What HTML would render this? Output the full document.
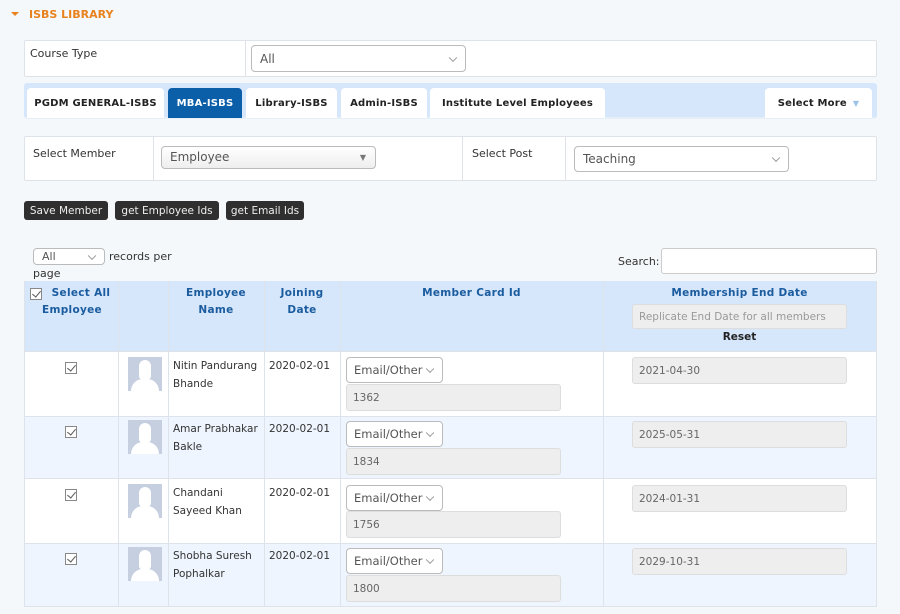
<!DOCTYPE html>
<html><head><meta charset="utf-8"><style>
*{box-sizing:border-box;margin:0;padding:0}
body{width:900px;height:614px;background:#f5f8fa;font-family:"DejaVu Sans","Liberation Sans",sans-serif;font-size:11px;color:#333;position:relative;overflow:hidden}
.a{position:absolute}
.box{position:absolute;background:#fff;border:1px solid #dde3e8;border-radius:2px}
.sel{position:absolute;background:#fff;border:1px solid #bbb;border-radius:4px;font-size:12px;color:#555;padding-left:8px;display:flex;align-items:center}
.sel:after{content:"";position:absolute;right:9px;top:50%;width:5px;height:5px;border-right:1px solid #999;border-bottom:1px solid #999;transform:translateY(-70%) rotate(45deg)}
.tab{position:absolute;top:88px;height:30px;background:#fff;border-radius:4px 4px 0 0;font-weight:bold;font-size:10px;color:#222;display:flex;align-items:center;justify-content:center;letter-spacing:.2px}
.btn{position:absolute;top:201px;height:19px;background:#2f2f2f;color:#eee;border-radius:3px;font-size:10.5px;display:flex;align-items:center;justify-content:center}
.th{position:absolute;color:#1a5c9e;font-weight:bold;font-size:10.5px;text-align:center;line-height:17px;letter-spacing:.3px}
.vl{position:absolute;width:1px;background:#dde3e8}
.cb{position:absolute;width:12px;height:12px;border:1px solid #888;background:#fff}
.cb:after{content:"";position:absolute;left:3px;top:0px;width:4px;height:7px;border-right:1.5px solid #555;border-bottom:1.5px solid #555;transform:rotate(40deg)}
.av{position:absolute;width:34px;height:34px;background:#c5cfe0;overflow:hidden}
.av:before{content:"";position:absolute;left:11px;top:3px;width:12px;height:20px;background:#fff;border-radius:6px 6px 4px 4px}
.av:after{content:"";position:absolute;left:3px;top:22px;width:28px;height:16px;background:#fff;border-radius:12px 12px 0 0}
.inp{position:absolute;background:#eee;border:1px solid #ddd;border-radius:3px;font-size:10.5px;color:#666;padding-left:6px;display:flex;align-items:center}
.t{position:absolute;font-size:10.5px;color:#333;line-height:18px}
.em{font-size:11.5px;padding-left:7px}
</style></head><body>
<div class="a" style="left:11px;top:12px;width:0;height:0;border-left:4px solid transparent;border-right:4px solid transparent;border-top:4px solid #e8821e"></div>
<div class="a" style="left:29px;top:8px;color:#e8821e;font-weight:bold;font-size:11px">ISBS LIBRARY</div>

<div class="box" style="left:24px;top:40px;width:853px;height:37px"></div>
<div class="vl" style="left:245px;top:41px;height:35px"></div>
<div class="a" style="left:30px;top:47px;font-size:11px">Course Type</div>
<div class="sel" style="left:251px;top:45px;width:215px;height:27px">All</div>

<div class="a" style="left:24px;top:83px;width:853px;height:36px;background:#d6e6fb;border-radius:3px;border-bottom:2px solid #e6eef8"></div>
<div class="tab" style="left:27px;width:137px">PGDM GENERAL-ISBS</div>
<div class="tab" style="left:168px;width:74px;background:#0b5ea8;color:#fff">MBA-ISBS</div>
<div class="tab" style="left:246px;width:91px">Library-ISBS</div>
<div class="tab" style="left:341px;width:86px">Admin-ISBS</div>
<div class="tab" style="left:430px;width:175px">Institute Level Employees</div>
<div class="tab" style="left:765px;width:107px">Select More <span style="color:#9cc3e8;margin-left:6px;font-size:8px">▼</span></div>

<div class="box" style="left:24px;top:136px;width:853px;height:45px"></div>
<div class="vl" style="left:153px;top:137px;height:43px"></div>
<div class="vl" style="left:462px;top:137px;height:43px"></div>
<div class="vl" style="left:565px;top:137px;height:43px"></div>
<div class="a" style="left:33px;top:147px">Select Member</div>
<div class="a" style="left:161px;top:146px;width:215px;height:23px;background:linear-gradient(#fff,#eee);border:1px solid #bbb;border-radius:4px;font-size:12px;color:#555;padding-left:8px;line-height:21px">Employee<span style="position:absolute;right:9px;font-size:8px;color:#777">▼</span></div>
<div class="a" style="left:472px;top:147px">Select Post</div>
<div class="sel" style="left:574px;top:146px;width:215px;height:26px">Teaching</div>

<div class="btn" style="left:24px;width:84px">Save Member</div>
<div class="btn" style="left:115px;width:104px">get Employee Ids</div>
<div class="btn" style="left:226px;width:78px">get Email Ids</div>

<div class="sel" style="left:33px;top:248px;width:72px;height:17px;font-size:11px">All</div>
<div class="a" style="left:109px;top:250px">records per</div>
<div class="a" style="left:33px;top:267px">page</div>
<div class="a" style="left:618px;top:255px">Search:</div>
<div class="a" style="left:661px;top:248px;width:216px;height:26px;background:#fff;border:1px solid #ccc;border-radius:3px"></div>

<div class="a" style="left:24px;top:281px;width:853px;height:326px;border:1px solid #dde3e8;background:#fff"></div>
<div class="a" style="left:25px;top:281px;width:851px;height:71px;background:#d6e6fb;border-bottom:1px solid #dde3e8"></div>
<div class="a" style="left:25px;top:416px;width:851px;height:63px;background:#eef5fe;border-top:1px solid #dde3e8;border-bottom:1px solid #dde3e8"></div>
<div class="a" style="left:25px;top:543px;width:851px;height:63px;background:#eef5fe;border-top:1px solid #dde3e8"></div>
<div class="vl" style="left:118px;top:281px;height:326px"></div>
<div class="vl" style="left:168px;top:281px;height:326px"></div>
<div class="vl" style="left:264px;top:281px;height:326px"></div>
<div class="vl" style="left:340px;top:281px;height:326px"></div>
<div class="vl" style="left:603px;top:281px;height:326px"></div>

<div class="cb" style="left:30px;top:288px"></div>
<div class="th" style="left:26px;top:285px;width:92px;padding-left:18px">Select All</div>
<div class="th" style="left:26px;top:302px;width:92px">Employee</div>
<div class="th" style="left:168px;top:285px;width:96px">Employee<br>Name</div>
<div class="th" style="left:264px;top:285px;width:76px">Joining<br>Date</div>
<div class="th" style="left:340px;top:285px;width:263px">Member Card Id</div>
<div class="th" style="left:603px;top:285px;width:273px">Membership End Date</div>
<div class="inp" style="left:632px;top:304px;width:215px;height:25px;color:#999">Replicate End Date for all members</div>
<div class="a" style="left:603px;top:331px;width:273px;text-align:center;font-weight:bold;font-size:10.5px;color:#222">Reset</div>

<div class="cb" style="left:65px;top:362px"></div><div class="av" style="left:128px;top:357px"></div>
<div class="t" style="left:173px;top:357px">Nitin Pandurang<br>Bhande</div><div class="t" style="left:269px;top:357px">2020-02-01</div>
<div class="sel em" style="left:346px;top:357px;width:97px;height:26px">Email/Other</div>
<div class="inp" style="left:346px;top:384px;width:215px;height:27px">1362</div>
<div class="inp" style="left:632px;top:357px;width:215px;height:27px">2021-04-30</div>

<div class="cb" style="left:65px;top:426px"></div><div class="av" style="left:128px;top:420px"></div>
<div class="t" style="left:173px;top:420px">Amar Prabhakar<br>Bakle</div><div class="t" style="left:269px;top:420px">2020-02-01</div>
<div class="sel em" style="left:346px;top:421px;width:97px;height:26px">Email/Other</div>
<div class="inp" style="left:346px;top:448px;width:215px;height:27px">1834</div>
<div class="inp" style="left:632px;top:421px;width:215px;height:27px">2025-05-31</div>

<div class="cb" style="left:65px;top:489px"></div><div class="av" style="left:128px;top:484px"></div>
<div class="t" style="left:173px;top:484px">Chandani<br>Sayeed Khan</div><div class="t" style="left:269px;top:484px">2020-02-01</div>
<div class="sel em" style="left:346px;top:485px;width:97px;height:26px">Email/Other</div>
<div class="inp" style="left:346px;top:511px;width:215px;height:27px">1756</div>
<div class="inp" style="left:632px;top:485px;width:215px;height:27px">2024-01-31</div>

<div class="cb" style="left:65px;top:553px"></div><div class="av" style="left:128px;top:547px"></div>
<div class="t" style="left:173px;top:547px">Shobha Suresh<br>Pophalkar</div><div class="t" style="left:269px;top:547px">2020-02-01</div>
<div class="sel em" style="left:346px;top:548px;width:97px;height:26px">Email/Other</div>
<div class="inp" style="left:346px;top:575px;width:215px;height:27px">1800</div>
<div class="inp" style="left:632px;top:548px;width:215px;height:27px">2029-10-31</div>
</body></html>
